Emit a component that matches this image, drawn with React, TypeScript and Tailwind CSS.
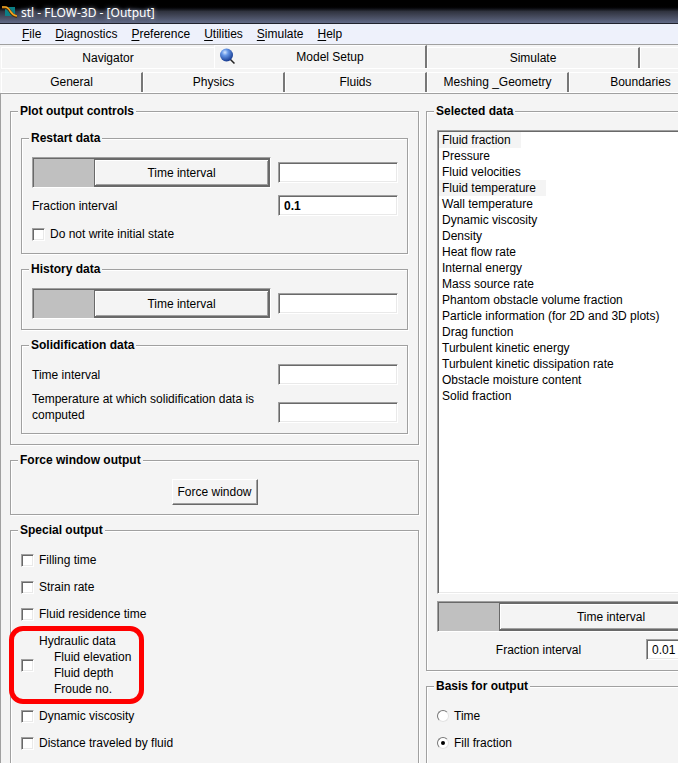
import { useState } from 'react'
import clsx from 'clsx'

const MENUS = ['File', 'Diagnostics', 'Preference', 'Utilities', 'Simulate', 'Help']
const SUB_TABS = ['General', 'Physics', 'Fluids', 'Meshing _Geometry', 'Boundaries']

const SELECTED_DATA = [
  'Fluid fraction',
  'Pressure',
  'Fluid velocities',
  'Fluid temperature',
  'Wall temperature',
  'Dynamic viscosity',
  'Density',
  'Heat flow rate',
  'Internal energy',
  'Mass source rate',
  'Phantom obstacle volume fraction',
  'Particle information (for 2D and 3D plots)',
  'Drag function',
  'Turbulent kinetic energy',
  'Turbulent kinetic dissipation rate',
  'Obstacle moisture content',
  'Solid fraction',
]

const sunken =
  'border border-t-[#a0a0a0] border-l-[#a0a0a0] border-b-white border-r-white shadow-[inset_1px_1px_0_#696969,inset_-1px_-1px_0_#e9e9e9]'

interface GroupProps {
  title: string
  className?: string
  children: React.ReactNode
}

function Group({ title, className, children }: GroupProps) {
  return (
    <fieldset
      className={clsx(
        'min-w-0 border border-[#a0a0a0] px-2.5 shadow-[1px_1px_0_#fff,inset_1px_1px_0_#fff]',
        className,
      )}
    >
      <legend className="-ml-[3px] bg-[#f4f4f4] px-0.5 font-bold">{title}</legend>
      {children}
    </fieldset>
  )
}

interface FieldProps {
  label: string
  id?: string
  defaultValue?: string
  className?: string
}

function Field({ label, id, defaultValue, className = 'w-[120px]' }: FieldProps) {
  return (
    <input
      type="text"
      id={id}
      aria-label={id ? undefined : label}
      defaultValue={defaultValue}
      className={clsx('h-[21px] shrink-0 bg-white pl-[5px] outline-none', sunken, className)}
    />
  )
}

function IntervalToggle({ className }: { className?: string }) {
  return (
    <div className={clsx('flex h-[31px] border border-t-[#a0a0a0] border-l-[#a0a0a0] border-b-white border-r-white', className)}>
      <div className="w-[61px] shrink-0 border-t border-l border-[#696969] bg-[#c0c0c0]" />
      <button
        type="button"
        className="flex-1 border-2 border-l border-[#696969] shadow-[inset_1px_1px_0_#fff,inset_-1px_-1px_0_#a0a0a0]"
      >
        Time interval
      </button>
    </div>
  )
}

function CheckBox({ children, className }: { children: React.ReactNode; className?: string }) {
  return (
    <label className={clsx('flex items-center gap-[5px]', className)}>
      <input type="checkbox" className={clsx('size-[13px] shrink-0 appearance-none bg-white checked:bg-gray-500', sunken)} />
      {children}
    </label>
  )
}

function BasisOption({ label, checked, onChange }: { label: string; checked: boolean; onChange: () => void }) {
  return (
    <label className="flex items-center gap-[5px]">
      <input
        type="radio"
        name="basis"
        checked={checked}
        onChange={onChange}
        className="grid size-3 shrink-0 appearance-none place-items-center rounded-full border border-t-[#777] border-l-[#777] border-b-[#e3e3e3] border-r-[#e3e3e3] bg-white checked:before:size-1 checked:before:rounded-full checked:before:bg-black"
      />
      {label}
    </label>
  )
}

function TitleBar() {
  return (
    <header className="flex h-6 shrink-0 items-center gap-1 border-b border-[#20222c] bg-linear-to-b from-black from-25% via-[#30333f] via-50% to-[#626a86] pt-0.5 pl-0.5">
      <svg width="15" height="13" viewBox="0 0 15 13" className="shrink-0" aria-hidden="true">
        <path d="M3 1h10v9H3z" fill="#0b7f86" />
        <path d="M0 1.500h3c3 0 4 2 5.500 4.500S12 10 15 10.500" fill="none" stroke="#4a2c08" strokeWidth="2.800" />
        <path d="M0 1h3c3 0 4 2 5.500 4.500S12 9.500 15 10" fill="none" stroke="#f4a422" strokeWidth="1.600" />
      </svg>
      <h1 className="font-['Noto_Sans'] text-xs text-white [text-shadow:0_0_4px_#aab4d0]">stl - FLOW-3D - [Output]</h1>
    </header>
  )
}

function Tabs() {
  const raised = 'shrink-0 border-t border-l border-white'
  const divided = 'border-r-2 border-r-[#777]'
  return (
    <nav className="shrink-0 border-b border-[#a0a0a0] pl-px">
      <div className="flex h-[24px] items-end border-b border-white">
        <button type="button" className={clsx(raised, 'h-[21px] w-[213px]')}>Navigator</button>
        <button type="button" className={clsx(raised, divided, 'relative h-[23px] w-[213px] pl-5')}>
          <svg className="absolute top-0.5 left-1" width="17" height="17" viewBox="0 0 17 17" aria-hidden="true">
            <defs>
              <radialGradient id="ball" cx="38%" cy="30%" r="70%">
                <stop offset="0" stopColor="#d4e6ff" />
                <stop offset="0.35" stopColor="#6596e6" />
                <stop offset="1" stopColor="#173b91" />
              </radialGradient>
            </defs>
            <path d="M11 11l4.500 4.500" stroke="#222" strokeWidth="1.5" />
            <circle cx="7.5" cy="7" r="6.5" fill="url(#ball)" />
          </svg>
          Model Setup
        </button>
        <button type="button" className={clsx(raised, divided, 'h-[21px] w-[213px]')}>Simulate</button>
        <div className={clsx(raised, 'h-[21px] w-[213px]')} />
      </div>
      <div className="flex h-6 items-center border-b border-white pt-0.5">
        {SUB_TABS.map((tab, i) => (
          <button key={tab} type="button" className={clsx(raised, i < 4 && divided, 'h-5 w-[142px]')}>
            {tab}
          </button>
        ))}
      </div>
    </nav>
  )
}

export default function App() {
  const [basis, setBasis] = useState('Fill fraction')

  return (
    <div className="flex h-screen flex-col overflow-hidden bg-[#f4f4f4] font-['Liberation_Sans',Arial,sans-serif] text-xs text-black">
      <TitleBar />
      <div className="flex h-[21px] shrink-0 items-center gap-3.5 border-b border-[#a0a0a0] bg-[#eef1fb] pl-[22px]">
        {MENUS.map(menu => (
          <button key={menu} type="button">
            <span className="underline underline-offset-2">{menu[0]}</span>
            {menu.slice(1)}
          </button>
        ))}
      </div>
      <Tabs />

      <main className="flex min-h-0 flex-1 gap-[7px] border-l border-[#a0a0a0] pt-[9px] pl-[9px]">
        {/* Left column */}
        <div className="flex w-[409px] shrink-0 flex-col gap-[7px]">
          <Group title="Plot output controls" className="shrink-0 pt-[11px] pb-2.5">
            <div className="flex flex-col gap-[7px]">
              <Group title="Restart data" className="py-[11px]">
                <div className="flex items-center gap-[7px]">
                  <IntervalToggle className="w-[239px] shrink-0" />
                  <Field label="Restart time interval" />
                </div>
                <div className="mt-[7px] flex items-center gap-[7px]">
                  <label htmlFor="restart-fraction" className="w-[239px] shrink-0">Fraction interval</label>
                  <Field id="restart-fraction" label="Fraction interval" defaultValue="0.1" className="w-[120px] font-bold" />
                </div>
                <CheckBox className="mt-2.5">Do not write initial state</CheckBox>
              </Group>

              <Group title="History data" className="pt-[11px] pb-2.5">
                <div className="flex items-center gap-[7px]">
                  <IntervalToggle className="w-[239px] shrink-0" />
                  <Field label="History time interval" />
                </div>
              </Group>

              <Group title="Solidification data" className="pt-[11px] pb-2.5">
                <div className="flex items-center gap-[7px]">
                  <label htmlFor="solid-interval" className="w-[239px] shrink-0">Time interval</label>
                  <Field id="solid-interval" label="Time interval" />
                </div>
                <div className="mt-1.5 flex items-end gap-[7px]">
                  <label htmlFor="solid-temp" className="w-[239px] shrink-0">
                    Temperature at which solidification data is computed
                  </label>
                  <Field id="solid-temp" label="Temperature" />
                </div>
              </Group>
            </div>
          </Group>

          <Group title="Force window output" className="shrink-0 pt-[11px] pb-[9px]">
            <button
              type="button"
              className="mx-auto block h-[26px] w-[86px] border border-t-white border-l-white border-r-[#696969] border-b-[#696969] shadow-[inset_-1px_-1px_0_#a0a0a0]"
            >
              Force window
            </button>
          </Group>

          <Group title="Special output" className="flex-1 border-b-0 pt-3.5">
            <div className="flex flex-col gap-[11px]">
              <CheckBox>Filling time</CheckBox>
              <CheckBox>Strain rate</CheckBox>
              <CheckBox>Fluid residence time</CheckBox>
              <div className="relative">
                <CheckBox>
                  <span>
                    Hydraulic data
                    <span className="block pl-[15px]">Fluid elevation</span>
                    <span className="block pl-[15px]">Fluid depth</span>
                    <span className="block pl-[15px]">Froude no.</span>
                  </span>
                </CheckBox>
                {/* highlight ring */}
                <div className="pointer-events-none absolute -top-[7px] -left-3 h-[78px] w-[135px] rounded-[14px] border-5 border-[#ff0000]" />
              </div>
              <CheckBox>Dynamic viscosity</CheckBox>
              <CheckBox>Distance traveled by fluid</CheckBox>
            </div>
          </Group>
        </div>

        {/* Right column, runs past the window edge */}
        <div className="flex w-[310px] shrink-0 flex-col gap-[7px]">
          <Group title="Selected data" className="shrink-0 pt-[11px] pb-2.5">
            <ul role="listbox" aria-label="Selected data" className={clsx('h-[464px] bg-white p-px', sunken)}>
              {SELECTED_DATA.map(item => {
                const selected = item === 'Fluid fraction' || item === 'Fluid temperature'
                return (
                  <li
                    key={item}
                    role="option"
                    aria-selected={selected}
                    className={clsx('w-fit pr-2.5 pl-[3px]', selected && 'bg-[#f4f4f4]')}
                  >
                    {item}
                  </li>
                )
              })}
            </ul>
            <IntervalToggle className="mt-[7px]" />
            <div className="mt-[7px] flex items-center gap-1.5">
              <label htmlFor="data-fraction" className="flex-1 text-center">Fraction interval</label>
              <Field id="data-fraction" label="Fraction interval" defaultValue="0.01" className="w-[79px]" />
            </div>
          </Group>

          <Group title="Basis for output" className="flex-1 border-b-0 pt-3.5">
            <div className="flex flex-col gap-[11px]">
              {['Time', 'Fill fraction'].map(label => (
                <BasisOption key={label} label={label} checked={basis === label} onChange={() => setBasis(label)} />
              ))}
            </div>
          </Group>
        </div>
      </main>
    </div>
  )
}
